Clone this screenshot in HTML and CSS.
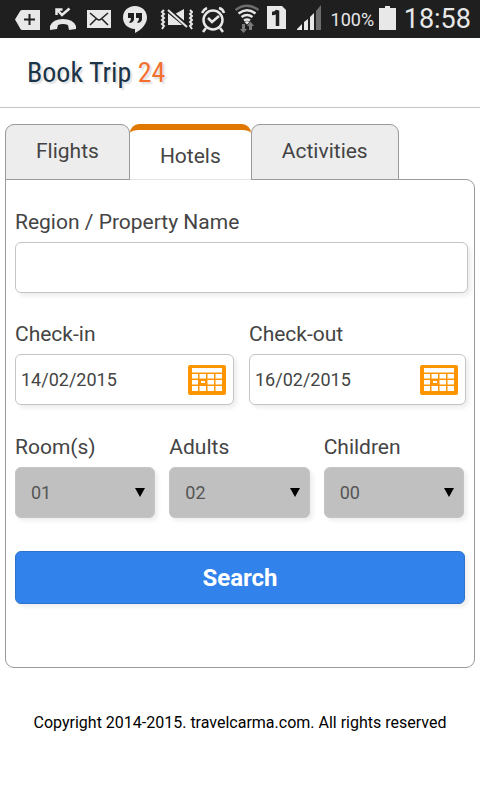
FILE: index.html
```html
<!DOCTYPE html>
<html lang="en">
<head>
<meta charset="utf-8">
<meta name="viewport" content="width=device-width, initial-scale=1">
<title>Book Trip 24</title>
<link rel="stylesheet" href="styles.css">
</head>
<body>
<div class="status">
  <div class="status-icons">
    <svg width="27" height="38" viewBox="15 0 27 38"><path fill="#e8e8e8" d="M15 19.500 20.500 10.500Q21 10 22 10H40V30H22Q21 30 20.500 29Z"/><path stroke="#1f1f1f" stroke-width="2" d="M29.500 14v11M24 19.500h11"/></svg>
    <svg width="29" height="38" viewBox="50 0 29 38"><path fill="#e8e8e8" d="M50 26Q53 19 63 19T76 26V29L69 30L68 25Q63 23 58 25L57 29L50 30Z"/><path fill="none" stroke="#e8e8e8" stroke-width="2.500" d="M57 9.500 62 15 69.500 8.500M56.500 15V9.500h6"/></svg>
    <svg width="27" height="38" viewBox="87 0 27 38"><path fill="#e8e8e8" d="M87 10h24v18H87z"/><path fill="none" stroke="#1f1f1f" stroke-width="1.500" d="m90 13 7 6q2 2 4 0l7-6M90 25l6-6M108 25l-6-6"/></svg>
    <svg width="28" height="38" viewBox="122 0 28 38"><path fill="#e8e8e8" d="M135 6c7 0 12 5 12 11.500 0 6-5 12-12 15.500v-4c-7 0-12-5-12-11.500S128 6 135 6z"/><path fill="#1f1f1f" d="M128 13h6v6q0 3-4 4l-1-1q2-1 2-4h-3zM136 13h6v6q0 3-4 4l-1-1q2-1 2-4h-3z"/></svg>
    <svg width="35" height="38" viewBox="158 0 35 38"><path fill="#e8e8e8" d="M168 13l15 12h-15zM175 14l9-5v12z"/><path stroke="#1f1f1f" stroke-width="4.500" d="m168 10 20 17"/><path fill="#e8e8e8" d="M168 14l13 10.500h-13z"/><path stroke="#e8e8e8" stroke-width="2" d="m168 10 19 17"/><path fill="none" stroke="#e8e8e8" stroke-width="2" d="m164 10-2 2 2 2-2 2 2 2-2 2 2 2-2 2 2 2-2 3M190 10l2 2-2 2 2 2-2 2 2 2-2 2 2 2-2 2 2 3"/></svg>
    <svg width="26" height="38" viewBox="201 0 26 38"><g fill="none" stroke="#e8e8e8" stroke-width="2.500"><circle cx="213" cy="20" r="9.500"/><path d="m208 18 4 4 7-6M202 13q2-4 5-5M219 8q4 1 5 5M206 28l-3 4M220 28l3 4"/></g></svg>
    <svg width="24" height="38" viewBox="235 0 24 38"><g fill="none" stroke="#e8e8e8" stroke-width="2.400"><path stroke="#6e6e6e" d="M235.500 10Q247 1.500 258.500 10"/><path d="M238.500 13.500q8.500-6.500 17 0M241.500 17q5.500-4 11 0M244 20.500q3-2 6 0"/></g><path fill="#e8e8e8" d="m244.500 22 2.500 2.500 2.500-2.500-2.500-1z"/><path fill="#7b7b7b" d="M242 24h3v5h2l-3.500 4-3.500-4h2zM249 30v-4h-2l3.500-4.500 3.500 4.500h-2v4z"/></svg>
    <svg width="22" height="38" viewBox="267 0 22 38"><path fill="#e8e8e8" d="M267 6h15l4 4v19h-19z"/><path fill="none" stroke="#1f1f1f" stroke-width="3.500" d="M272 13.500q4 0 5.500-3V26"/></svg>
    <svg width="26" height="38" viewBox="297 0 26 38"><path fill="#e8e8e8" d="M297 30v-1l5-5v6zM304 30v-8l4-3v11zM310 30V17l4-4v17z"/><path fill="#6e6e6e" d="M316 30V11l5-6v25z"/></svg>
  </div>
  <div class="status-power">
    <span class="percent">100%</span>
    <svg width="17" height="38" viewBox="378 0 17 38"><path fill="#e8e8e8" d="M378 8h6V6h5v2h6v22h-17z"/></svg>
  </div>
  <span class="clock">18:58</span>
</div>
<header class="header"><a class="logo" href="#">Book Trip <span class="logo-num">24</span></a></header>
<main class="main">
  <nav class="tabs">
    <button class="tab" type="button">Flights</button>
    <button class="tab tab-active" type="button">Hotels</button>
    <button class="tab" type="button">Activities</button>
  </nav>
  <form class="panel">
    <div class="field">
      <label for="region">Region / Property Name</label>
      <input class="box" id="region" type="text">
    </div>
    <div class="row dates">
      <div class="field">
        <label for="checkin">Check-in</label>
        <div class="box date">
          <input id="checkin" type="text" value="14/02/2015">
          <svg class="calendar" viewBox="0 0 38 30"><rect width="38" height="30" rx="2" fill="#ff9500"/><path fill="#fff" d="M4 3h30v4.500H4zM4 9h6v4.500H4zM11.500 9h6.500v4.500h-6.500zM19.500 9h6.500v4.500h-6.500zM27.500 9h6.500v4.500h-6.500zM4 15h6v4.500H4zM11.500 15h6.500v4.500h-6.500zM19.500 15h6.500v4.500h-6.500zM27.500 15h6.500v4.500h-6.500zM4 21h6v5H4zM11.500 21h6.500v5h-6.500zM19.500 21h6.500v5h-6.500zM27.500 21h6.500v5h-6.500z"/><path fill="#fff" stroke="#ff9500" stroke-width="2" d="M12 15h6v4h-6z"/></svg>
        </div>
      </div>
      <div class="field">
        <label for="checkout">Check-out</label>
        <div class="box date">
          <input id="checkout" type="text" value="16/02/2015">
          <svg class="calendar" viewBox="0 0 38 30"><rect width="38" height="30" rx="2" fill="#ff9500"/><path fill="#fff" d="M4 3h30v4.500H4zM4 9h6v4.500H4zM11.500 9h6.500v4.500h-6.500zM19.500 9h6.500v4.500h-6.500zM27.500 9h6.500v4.500h-6.500zM4 15h6v4.500H4zM11.500 15h6.500v4.500h-6.500zM19.500 15h6.500v4.500h-6.500zM27.500 15h6.500v4.500h-6.500zM4 21h6v5H4zM11.500 21h6.500v5h-6.500zM19.500 21h6.500v5h-6.500zM27.500 21h6.500v5h-6.500z"/><path fill="#fff" stroke="#ff9500" stroke-width="2" d="M12 15h6v4h-6z"/></svg>
        </div>
      </div>
    </div>
    <div class="row guests">
      <div class="field">
        <label for="rooms">Room(s)</label>
        <div class="select"><select class="box" id="rooms"><option>01</option></select></div>
      </div>
      <div class="field">
        <label for="adults">Adults</label>
        <div class="select"><select class="box" id="adults"><option>02</option></select></div>
      </div>
      <div class="field">
        <label for="children">Children</label>
        <div class="select"><select class="box" id="children"><option>00</option></select></div>
      </div>
    </div>
    <button class="search" type="submit">Search</button>
  </form>
</main>
<footer class="footer">Copyright 2014-2015. travelcarma.com. All rights reserved</footer>
</body>
</html>
```
FILE: styles.css
```css
* { box-sizing: border-box; }
body {
  margin: 0;
  background: #fff;
  color: #444;
  font-family: Roboto, "Liberation Sans", sans-serif;
  font-size: 21px;
}
svg { display: block; flex: none; }
input, select, button { font: inherit; color: inherit; margin: 0; }

.status {
  display: flex;
  justify-content: space-between;
  align-items: center;
  height: 38px;
  padding: 0 9px 0 15px;
  background: #1f1f1f;
  color: #e8e8e8;
}
.status-icons { display: flex; gap: 8px; }
.status-power { display: flex; align-items: center; gap: 5px; }
.percent { font-size: 18px; }
.clock { font-size: 27px; }

.header {
  height: 70px;
  padding: 18px 27px;
  border-bottom: 1px solid #c4c4c4;
}
.logo {
  color: #1b3447;
  font-family: "Roboto Condensed", "Liberation Sans", sans-serif;
  font-size: 28px;
  line-height: 34px;
  text-decoration: none;
  text-shadow: 2px 2px 2px #ddd;
}
.logo-num { color: #f37032; }

.main { padding: 16px 5px 0; }
.tabs {
  display: flex;
  position: relative;
  margin-bottom: -1px;
}
.tab {
  height: 56px;
  padding: 0 30px 2px;
  border: 1px solid #999;
  border-radius: 9px 9px 0 0;
  background: #ededed;
}
.tab-active {
  padding: 2px 30px 0;
  border: 0;
  border-top: 6px solid #e07800;
  border-bottom: 1px solid #e4e4e4;
  background: #fff;
}
.panel {
  padding: 30px 6px 63px 9px;
  border: 1px solid #999;
  border-radius: 0 9px 9px 9px;
}
.field { display: flex; flex-direction: column; gap: 8px; min-width: 0; }
label { line-height: 24px; }
.box {
  width: 100%;
  height: 51px;
  border: 1px solid #c4c4c4;
  border-radius: 6px;
  background: #fff;
  box-shadow: 3px 3px 4px #eee;
}
.row { display: grid; margin-top: 29px; }
.dates { grid-template-columns: 219fr 217fr; gap: 15px; padding-right: 2px; }
.date { display: flex; align-items: center; padding: 0 7px 0 5px; }
.date input {
  flex: 1;
  min-width: 0;
  padding: 0;
  border: 0;
  background: none;
  font-size: 18px;
}
.calendar { width: 38px; height: 30px; }
.guests { grid-template-columns: repeat(3, 1fr); gap: 14px; margin-top: 30px; padding-right: 4px; }
.select { display: grid; align-items: center; }
.select > *, .select::after { grid-area: 1 / 1; }
.select::after {
  content: "";
  justify-self: end;
  margin-right: 10px;
  border: 5px solid transparent;
  border-top: 9px solid #000;
  border-bottom: 0;
  pointer-events: none;
}
.select .box {
  appearance: none;
  padding: 0 15px;
  background: #c0c0c0;
  color: #555;
  font-size: 18px;
}
.search {
  display: block;
  width: calc(100% - 3px);
  height: 53px;
  margin-top: 33px;
  border: 1px solid #2d74cc;
  border-radius: 6px;
  background: #3182ea;
  box-shadow: 3px 3px 4px #eee;
  color: #fff;
  font-size: 24px;
  font-weight: 700;
}
.footer {
  padding: 45px 8px;
  color: #000;
  font-size: 16px;
  line-height: 20px;
  text-align: center;
}
```
